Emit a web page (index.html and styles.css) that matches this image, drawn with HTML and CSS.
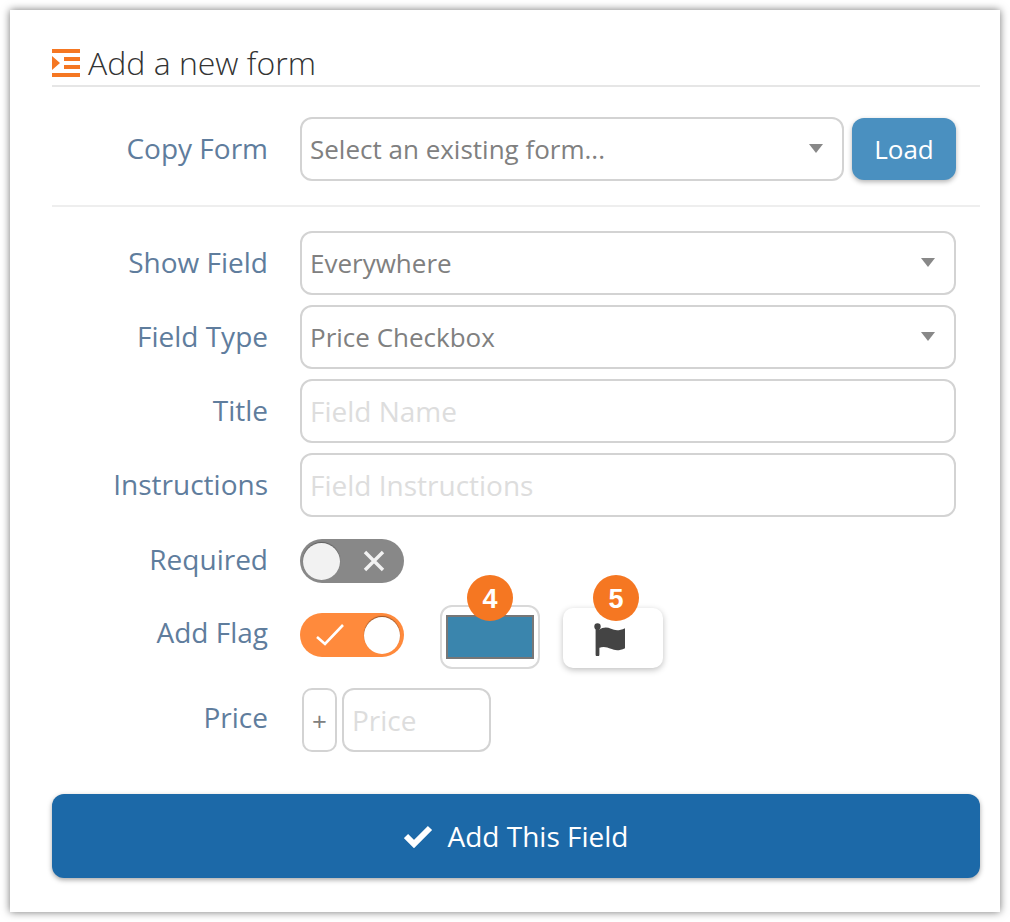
FILE: index.html
```html
<!DOCTYPE html>
<html>
<head>
    <meta http-equiv="Content-Type" content="text/html; charset=utf-8" />
    <title>Add a new form</title>
    <link rel="stylesheet" href="styles.css">
</head>

<body>
<div class="card">
    <h2 class="title">
        <svg class="title-icon" width="28" height="28" viewBox="0 0 28 28">
            <path fill="#f57722" d="M0 0h28v4H0zM0 24h28v4H0zM12 8h16v4H12zM12 16h16v4H12zM0 7l8 7-8 7z"/>
        </svg>
        <span>Add a new form</span>
    </h2>

    <div class="row copy-row">
        <label>Copy Form</label>
        <div class="field select">Select an existing form...<i class="caret"></i></div>
        <button class="load">Load</button>
    </div>

    <div class="fields">
        <div class="row">
            <label>Show Field</label>
            <div class="field select">Everywhere<i class="caret"></i></div>
        </div>
        <div class="row">
            <label>Field Type</label>
            <div class="field select">Price Checkbox<i class="caret"></i></div>
        </div>
        <div class="row">
            <label>Title</label>
            <input class="field" placeholder="Field Name">
        </div>
        <div class="row">
            <label>Instructions</label>
            <input class="field" placeholder="Field Instructions">
        </div>
        <div class="row required-row">
            <label>Required</label>
            <div class="toggle off">
                <i class="knob"></i>
                <svg width="24" height="24" viewBox="0 0 24 24"><path d="M3 3l18 18M21 3L3 21" stroke="#f2f2f2" stroke-width="3.4" fill="none"/></svg>
            </div>
        </div>
        <div class="row flag-row">
            <label>Add Flag</label>
            <div class="toggle on">
                <svg width="30" height="26" viewBox="0 0 30 26"><path d="M2 15l8 7L28 3" stroke="#fff" stroke-width="2.6" fill="none"/></svg>
                <i class="knob"></i>
            </div>
            <div class="swatch">
                <i></i>
                <span class="badge">4</span>
            </div>
            <div class="flag-btn">
                <svg width="32" height="33" viewBox="0 0 32 33">
                    <circle cx="3.5" cy="3.5" r="3.2" fill="#444"/>
                    <path fill="#444" d="M1.600 4h3.800v27.500a1.900 1.900 0 0 1-3.800 0zM5 7c4-3 8-3 12-1.200s8 2.200 14-.6v20c-6 2.800-10 2.400-14 .6S9 23 5 25z"/>
                </svg>
                <span class="badge">5</span>
            </div>
        </div>
        <div class="row price-row">
            <label>Price</label>
            <div class="price-sign">+</div>
            <input class="field price-input" placeholder="Price">
        </div>
    </div>

    <button class="submit">
        <svg width="30" height="24" viewBox="0 0 30 24"><path d="M2 12l8 8L26 4" stroke="#fff" stroke-width="6" fill="none"/></svg>
        <span>Add This Field</span>
    </button>
</div>
</body>
</html>
```

FILE: styles.css
```css
* {
    box-sizing: border-box;
}

body {
    margin: 0;
    padding: 10px;
    background: #fff;
    font-family: "Open Sans", "Liberation Sans", sans-serif;
}

.card {
    width: 990px;
    height: 902px;
    padding: 39px 20px 0 42px;
    background: #fff;
    box-shadow: 0 0 8px rgba(0, 0, 0, .55);
}

.title {
    display: flex;
    align-items: center;
    gap: 8px;
    height: 38px;
    margin: 0;
    border-bottom: 2px solid #e6e6e6;
    padding-bottom: 9px;
    font-size: 32px;
    font-weight: 300;
    color: #333;
}

.title-icon {
    flex: none;
}

.row {
    display: flex;
    align-items: center;
}

.row label {
    flex: none;
    width: 216px;
    margin: 0 32px 2px 0;
    text-align: right;
    font-size: 28px;
    color: #5f7d9d;
}

.copy-row {
    height: 120px;
    padding: 6px 24px 0 0;
    border-bottom: 2px solid #eee;
}

.fields {
    padding: 24px 24px 0 0;
}

.fields > .row {
    height: 64px;
    margin-bottom: 10px;
}

.field {
    flex: 1;
    min-width: 0;
    height: 64px;
    padding: 0 8px;
    border: 2px solid #d3d3d3;
    border-radius: 12px;
    background: #fff;
    font-family: inherit;
    font-size: 26px;
    color: #808080;
    outline: none;
}

input.field {
    font-size: 28px;
}

.field::placeholder {
    color: #ddd;
    opacity: 1;
}

.select {
    position: relative;
    display: flex;
    align-items: center;
}

.caret {
    position: absolute;
    right: 19px;
    top: 25px;
    border: 7px solid transparent;
    border-top: 9px solid #888;
    border-bottom: 0;
}

.load {
    flex: none;
    width: 104px;
    height: 62px;
    margin: 0 0 1px 8px;
    border: 0;
    border-radius: 12px;
    background: #4a90c0;
    box-shadow: 0 2px 5px rgba(0, 0, 0, .3);
    font-family: inherit;
    font-size: 26px;
    color: #fff;
}

.toggle {
    display: flex;
    align-items: center;
    justify-content: space-between;
    flex: none;
    width: 104px;
    height: 44px;
    border-radius: 22px;
}

.knob {
    flex: none;
    width: 37px;
    height: 37px;
    border-radius: 50%;
}

.toggle.off {
    padding: 0 18px 0 3px;
    background: #888;
}

.toggle.off .knob {
    background: #f2f2f2;
    box-shadow: 0 -1px 1px rgba(0, 0, 0, .3);
}

.toggle.on {
    padding: 0 4px 0 15px;
    background: #ff8a3c;
}

.toggle.on .knob {
    width: 36px;
    background: #fff;
    box-shadow: 0 -1px 1px rgba(0, 0, 0, .4);
}

.fields > .required-row {
    height: 44px;
    margin: 22px 0;
}

.required-row label {
    margin-bottom: 4px;
}

.fields > .flag-row {
    align-items: flex-start;
    margin-bottom: 19px;
}

.flag-row label {
    margin-top: 8px;
}

.flag-row .toggle {
    margin-top: 8px;
}

.swatch {
    position: relative;
    flex: none;
    width: 100px;
    height: 64px;
    margin-left: 36px;
    padding: 8px 4px;
    border: 2px solid #d9d9d9;
    border-radius: 12px;
}

.swatch i {
    display: block;
    height: 100%;
    border: 2px solid #777;
    background: #3a85ad;
}

.flag-btn {
    position: relative;
    display: flex;
    align-items: center;
    justify-content: center;
    flex: none;
    width: 100px;
    height: 60px;
    margin: 3px 0 0 23px;
    padding: 2px 6px 0 0;
    border-radius: 10px;
    background: #fff;
    box-shadow: 0 2px 6px rgba(0, 0, 0, .25);
}

.badge {
    position: absolute;
    top: -32px;
    left: 50%;
    width: 46px;
    height: 46px;
    margin-left: -23px;
    border-radius: 50%;
    background: #f57722;
    text-align: center;
    font-family: "Liberation Sans", sans-serif;
    font-size: 27px;
    font-weight: 700;
    line-height: 48px;
    color: #fff;
}

.flag-btn .badge {
    top: -33px;
    margin-left: -20px;
}

.price-row label {
    margin-bottom: 6px;
}

.price-sign {
    flex: none;
    width: 35px;
    height: 64px;
    margin-left: 2px;
    border: 2px solid #d3d3d3;
    border-radius: 10px;
    text-align: center;
    font-size: 26px;
    line-height: 62px;
    color: #808080;
}

.price-input {
    flex: none;
    width: 149px;
    margin-left: 5px;
}

.submit {
    display: flex;
    align-items: center;
    justify-content: center;
    gap: 14px;
    width: 928px;
    height: 84px;
    margin-top: 42px;
    border: 0;
    border-radius: 12px;
    background: #1c69a8;
    box-shadow: 0 2px 5px rgba(0, 0, 0, .35);
    font-family: inherit;
    font-size: 28px;
    color: #fff;
}
```
